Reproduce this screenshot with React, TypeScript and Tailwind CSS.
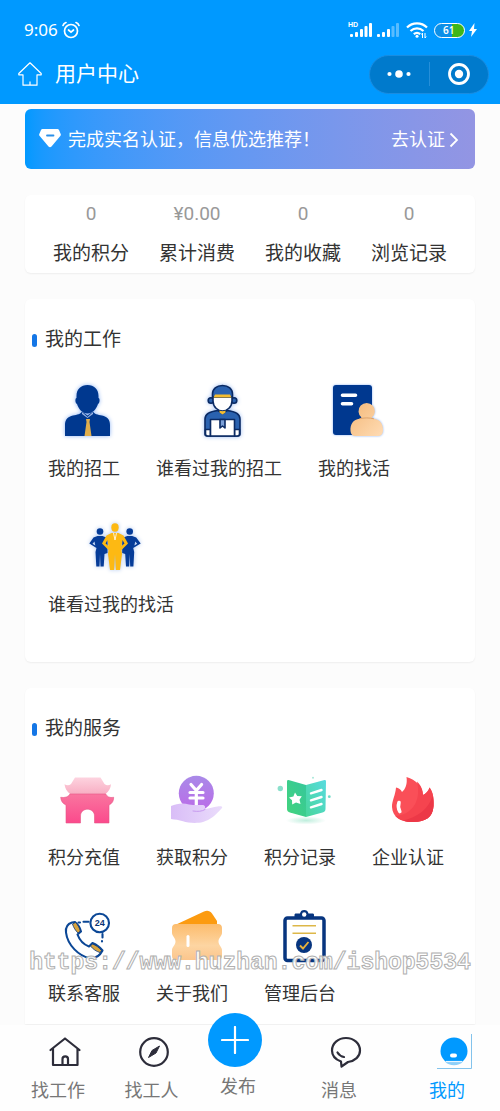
import type { ReactNode } from "react";

interface MenuItem {
  label: string;
  icon: ReactNode;
}

const PersonIcon = () => (
  <svg viewBox="0 0 60 60" className="size-15 drop-shadow-[0_0_2px_#8db4f5]">
    <path
      d="M29.5 5C36 5 40.500 9 40.500 16v2c1.500 0 1.500 5-.5 6-1.500 5-5.500 9.500-10.500 9.500S20.500 29 19 24c-2-1-2-6-.5-6v-2C18.500 9 23 5 29.500 5Z"
      fill="#00388f"
    />
    <path
      d="M7 56V45c0-6 3-8 8-9.500 4-.8 8-1.500 9-4l5.500 4 5.500-4c1 2.500 5 3.200 9 4 5 1.500 8 3.500 8 9.500v11Z"
      fill="#00388f"
    />
    <path d="m24 32 5.500 5 5.500-5v2l-5.500 4-5.500-4Z" fill="#9db8e6" />
    <path d="M28 39h4l-.5 3 2 14h-7l2-14Z" fill="#e0ae4c" />
  </svg>
);

const WorkerIcon = () => (
  <svg viewBox="0 0 60 60" className="size-15 drop-shadow-[0_0_2px_#9dbcf2]">
    <g stroke="#0a2a63" strokeWidth="1.6" strokeLinejoin="round">
      <circle cx="18" cy="20.500" r="2.800" fill="#2a62b0" />
      <circle cx="41" cy="20.500" r="2.800" fill="#2a62b0" />
      <path d="M20 17h19v4c0 6-5 10-9.500 10S20 27 20 21Z" fill="#fff" />
      <path d="M19.500 17v-3c0-5 4-8.500 10-8.500s10 3.500 10 8.500v3Z" fill="#2a62b0" />
      <path d="M12 54V39c0-5 4-7.500 13-8.500l4.500 3 4.500-3c9 1 13 3.500 13 8.500v15c0 2-1 2-2 2H14c-1 0-2 0-2-2Z" fill="#2a62b0" />
      <path d="M12.500 49.500h5V56H15c-2 0-2.500-1-2.500-2ZM41.500 49.500h5V54c0 1-.5 2-2.500 2h-2.500Z" fill="#fff" />
      <path d="M17.500 39.500h24V56h-24Z" fill="#fff" />
      <path d="M27 39.500h5V48l-2.500-2-2.500 2Z" fill="#7ba0d8" />
    </g>
    <path d="M22 14.500h15l1.500 3h-18Z" fill="#f5bd30" />
    <path d="M26.500 30.500c2 1 4 1 6 0v2l-3 2-3-2Z" fill="#f5bd30" />
  </svg>
);

const ResumeIcon = () => (
  <svg viewBox="0 0 60 60" className="size-15 drop-shadow-[0_0_1px_#8db4f5]">
    <defs>
      <linearGradient id="resumeBody" x1="0" y1="0" x2="1" y2="1">
        <stop offset="0" stopColor="#f3b878" />
        <stop offset="1" stopColor="#ffdcb5" />
      </linearGradient>
    </defs>
    <rect x="5" y="5" width="39" height="50" rx="3" fill="#00388f" />
    <path d="M14.500 15.300h13M14.500 23.800h9" stroke="#fff" strokeWidth="3.600" strokeLinecap="round" />
    <path
      d="M22.500 51c-.5-7 3-11.500 9-12.200l2-1.300a8.200 8.200 0 1 1 10.400 0l2 1.300c6 .7 9.600 5.200 9.100 12.200-.3 3.500-2 5-5 5H27.500c-3 0-4.700-1.500-5-5Z"
      fill="url(#resumeBody)"
    />
    <path d="M31.500 38.800c4.500-1.200 10-1.200 14.400 0" stroke="#dca36c" fill="none" />
  </svg>
);

const TeamIcon = () => (
  <svg viewBox="0 0 60 60" className="size-15 drop-shadow-[0_0_2px_#a9c3ee]">
    <g fill="#063c98">
      <circle cx="15" cy="15.500" r="3.300" />
      <path d="M12.500 20h5l5 2v15l-3 1-.8 12.500h-3.200L15 38l-.5 12.500h-3.200L10.500 36l1-4-7.200-4.500L8.500 21.500Zm-3 5.500-2 2.200 2.800 1.800Z" />
      <circle cx="44.700" cy="15.500" r="3.300" />
      <path d="M47.200 20h-5l-5 2v15l3 1 .8 12.500h3.200l.5-12.500.5 12.500h3.200L49.200 36l-1-4 7.500-4.500-4.500-6Zm3 5.500 2 2.200-2.800 1.800Z" />
    </g>
    <g fill="#fdb913">
      <ellipse cx="30" cy="11.500" rx="3.700" ry="4.200" />
      <path d="M26.500 17h7l5 2.500 4.500 8-6.500 6.500.5 4-2 16h-4.200L30 38l-.8 16H25l-2-16 .5-4-6.500-6.500 4.500-8ZM22.500 24l-2 3.500 3 2.500Zm15 0-1 6 3-2.500Z" fillRule="evenodd" />
    </g>
    <path d="m28.500 17 1.500 7 1.500-7" fill="none" stroke="#fff" strokeWidth=".8" />
  </svg>
);

const GateIcon = () => (
  <svg viewBox="0 0 60 60" className="size-15">
    <defs>
      <linearGradient id="gateBase" x1="0" y1="0" x2="0" y2="1">
        <stop offset="0" stopColor="#f9759f" />
        <stop offset="1" stopColor="#fb4a8c" />
      </linearGradient>
      <linearGradient id="gateRoof" x1="0" y1="0" x2="0" y2="1">
        <stop offset="0" stopColor="#fdd3df" />
        <stop offset="1" stopColor="#f8aec3" />
      </linearGradient>
    </defs>
    <path d="M17 8.500h25.500l4 6.500c2 1.500 4 1.500 6.500.3-.3 4-2 6.700-5.300 9.700H12c-3.500-3-5-5.700-5.500-9.700 2.500 1.200 4.500 1.200 6.500-.3Z" fill="url(#gateRoof)" />
    <path
      d="M12 25h35.700c1.500 3 4 4 8 3.300 0 3.700-1.500 6.200-4.700 7.700v18H36.500v-7c0-9-14-9-14 0v7H8V36c-3.500-1.500-5-4-5.300-7.700 4 .7 7.800-.3 9.300-3.300Z"
      fill="url(#gateBase)"
      stroke="#e65587"
      strokeWidth=".6"
    />
  </svg>
);

const YuanHandIcon = () => (
  <svg viewBox="0 0 60 60" className="size-15">
    <defs>
      <linearGradient id="coin" x1="0" y1="0" x2="0" y2="1">
        <stop offset="0" stopColor="#a98ae8" />
        <stop offset="1" stopColor="#bb6be8" />
      </linearGradient>
      <linearGradient id="palm" x1="0" y1="0" x2="1" y2="0">
        <stop offset="0" stopColor="#d9bdf7" />
        <stop offset="1" stopColor="#eadcfb" />
      </linearGradient>
    </defs>
    <circle cx="30.300" cy="24.300" r="17.500" fill="url(#coin)" />
    <path d="m25 15.500 5.300 6 5.300-6M24 23.500h13M24 29h13M30.300 21.500V37" fill="none" stroke="#fff" strokeWidth="3.200" strokeLinecap="round" strokeLinejoin="round" />
    <path
      d="M5 37c6-2.500 12-3.500 18-1.500l4 .5h9c3 0 4 2 2.500 4 5-.3 9-2 13-2.500 3.500-.5 5.500 0 4.500 1.500-6 7-12 12-19 14-6 1.500-15 1-20-.8C13 51 9 50.500 5 50Z"
      fill="url(#palm)"
    />
    <path d="M27 42c5 .8 9 .5 12-1.500" stroke="#c79aef" fill="none" strokeLinecap="round" />
  </svg>
);

const RecordBookIcon = () => (
  <svg viewBox="0 0 60 60" className="size-15">
    <defs>
      <linearGradient id="pageLeft" x1="1" y1="0" x2="0" y2="1">
        <stop offset="0" stopColor="#35c79c" />
        <stop offset="1" stopColor="#43d47c" />
      </linearGradient>
      <linearGradient id="pageRight" x1="1" y1="0" x2="0" y2="1">
        <stop offset="0" stopColor="#58dbe0" />
        <stop offset="1" stopColor="#48d69a" />
      </linearGradient>
      <radialGradient id="bookShade">
        <stop offset="0" stopColor="#bfeedd" />
        <stop offset="1" stopColor="#ffffff" />
      </radialGradient>
    </defs>
    <ellipse cx="32" cy="51.500" rx="20" ry="4" fill="url(#bookShade)" />
    <path d="M14.500 11 32 16v32l-16-4.500c-2-.6-3-1.500-3-3.500V12.500c0-1 .5-1.700 1.500-1.500Z" fill="url(#pageLeft)" />
    <path d="M50.500 11 32 16v32l16.500-4.500c2-.6 3-1.500 3-3.500l.5-27.500c0-1-.5-1.700-1.500-1.500Z" fill="url(#pageRight)" />
    <path d="m21 23.500 2.300 3.500 4.500.2-2.300 3.600 1 4.200-4.500-1.500-3.800 2-.2-4.300L15 28.500l4.400-1Z" fill="#fff" />
    <path d="m37 24.300 10.500-3.300M37 31.300 47.500 28M37 38.300 47.500 35" stroke="#fff" strokeWidth="2.400" strokeLinecap="round" />
    <circle cx="6.300" cy="19.500" r="2.700" fill="#8be0cc" />
    <circle cx="55.300" cy="27.700" r="1.400" fill="#6fdcc8" />
    <circle cx="39" cy="8.700" r="1" fill="#a8e8d8" />
  </svg>
);

const FlameIcon = () => (
  <svg viewBox="0 0 60 60" className="size-15">
    <path
      d="M24.500 8C34 11 40.500 17 41 26c3-1.500 5.500-4 6.500-7.500C51 23 52 29 51.500 37c-.5 11-8 16-20.500 16S10.500 48 10 38c-.2-6 3.500-12 4-19.500 2.500.5 5 2 6 4.500 3.500-3 5.500-8 4.500-15Z"
      fill="#fa4f58"
    />
    <path d="M35 12.500c4 4 5.800 8 6 13.500 3-1.500 5.500-4 6.500-7.500C51 23 52 29 51.500 37c-.5 11-8 16-20.500 16-8 0-14-2-17.500-6C28 46 40 34 35 12.500Z" fill="#f5444f" />
    <path d="M50.500 27C47 39 36 48.500 21 51.500c3 1 6 1.500 10 1.500 12.500 0 20-5 20.500-16 .2-4-.2-7-1-10Z" fill="#ec3847" />
    <path d="M17 33.500c-1 3-.8 6 .8 9" stroke="#fff" strokeWidth="3.600" strokeLinecap="round" fill="none" />
  </svg>
);

const HotlineIcon = () => (
  <svg viewBox="0 0 60 60" className="size-15">
    <g fill="none" stroke="#0b4796" strokeWidth="2.100" strokeLinejoin="round" strokeLinecap="round">
      <path d="M14 17.500c-5 1.500-6.500 5.500-6 10C9.500 40 21 51.500 32 53c6 .5 10-2.500 12.500-7.500-3-4-6.500-6-10-7.500L31 41.500C25.500 39.500 21.500 35 19.500 29.500l3.500-3c-1-4-3-7-6-9.500Z" fill="#fff" />
      <path d="M20.500 17.500h1.500M25.500 16.800h5M44.500 29v3.500M44 36v.5" />
      <circle cx="41.700" cy="18" r="9.300" fill="#fff" />
    </g>
    <path d="m14.500 19 3-1.500c2.500 2.500 4 5.500 4.800 8.500l-2.300 2c-2.500-2.500-4.500-5.500-5.500-9ZM34.500 39c3.500 1.300 6.500 3.500 9 6.500l-1.500 2c-3.500-1-7-3.200-9.500-6.500Z" fill="#d9a43c" stroke="#0b3576" strokeWidth=".8" />
    <text x="41.700" y="21" textAnchor="middle" fontSize="9" fontWeight="700" fontFamily="Liberation Sans, sans-serif" fill="#0b3576">
      24
    </text>
  </svg>
);

const WalletIcon = () => (
  <svg viewBox="0 0 60 60" className="size-15">
    <defs>
      <linearGradient id="walletFront" x1="0" y1="0" x2="0" y2="1">
        <stop offset="0" stopColor="#fcbc6c" />
        <stop offset=".6" stopColor="#fdd5a2" />
        <stop offset="1" stopColor="#fbc58c" />
      </linearGradient>
    </defs>
    <path d="M8 20.500 38 6.500c3-1.300 6-.8 8 2l5 7.500v5Z" fill="#fc9b10" />
    <path d="M10 19h42c2.500 0 4 1.500 4 4v5c0 3-3.500 5-3.500 8.500S56 42 56 45v6c0 2.500-1.500 4-4 4H10c-2.500 0-4-1.500-4-4v-6c0-3 3.500-5 3.500-8.500S6 31 6 28v-5c0-2.500 1.500-4 4-4Z" fill="url(#walletFront)" />
    <path d="M22 31.500v9" stroke="#fff" strokeWidth="3" strokeLinecap="round" />
  </svg>
);

const ClipboardIcon = () => (
  <svg viewBox="0 0 60 60" className="size-15">
    <rect x="11" y="13" width="39" height="42.500" rx="2.500" fill="#fff" stroke="#07357f" strokeWidth="3.500" />
    <path d="M20.500 13.500V10c0-1 .5-1.500 1.500-1.500h4C26.500 6 28 5 30.200 5s3.800 1 4.300 3.500h4c1 0 1.500.5 1.500 1.500v3.500Z" fill="#07357f" />
    <circle cx="30.200" cy="9.500" r="2.200" fill="#fff" />
    <path d="M18.500 20.700H42M18.500 28.300H42" stroke="#ddb748" strokeWidth="1.500" />
    <circle cx="30" cy="40" r="8" fill="#07357f" />
    <path d="m26 40.500 3 3 5.500-6.500" stroke="#e8b33c" strokeWidth="1.900" fill="none" />
  </svg>
);

const stats = [
  { label: "我的积分", value: "0" },
  { label: "累计消费", value: "¥0.00" },
  { label: "我的收藏", value: "0" },
  { label: "浏览记录", value: "0" },
];

const workItems: MenuItem[] = [
  { label: "我的招工", icon: <PersonIcon /> },
  { label: "谁看过我的招工", icon: <WorkerIcon /> },
  { label: "我的找活", icon: <ResumeIcon /> },
  { label: "谁看过我的找活", icon: <TeamIcon /> },
];

const serviceItems: MenuItem[] = [
  { label: "积分充值", icon: <GateIcon /> },
  { label: "获取积分", icon: <YuanHandIcon /> },
  { label: "积分记录", icon: <RecordBookIcon /> },
  { label: "企业认证", icon: <FlameIcon /> },
  { label: "联系客服", icon: <HotlineIcon /> },
  { label: "关于我们", icon: <WalletIcon /> },
  { label: "管理后台", icon: <ClipboardIcon /> },
];

const StatusBar = () => (
  <div className="flex h-10 items-center justify-between pl-6 pr-[23px]">
    <div className="flex items-center gap-1">
      <span className="font-['Noto_Sans',sans-serif] text-[17px] leading-5">9:06</span>
      <svg viewBox="0 0 18 18" className="size-[18px]" fill="none" stroke="currentColor" strokeWidth="1.700" strokeLinecap="round">
        <circle cx="9" cy="10" r="6.500" />
        <path d="m6.500 9 2.500 2.200L11.500 9M1 4.500C1.500 3 2.500 2 4 1.500M17 4.500C16.500 3 15.500 2 14 1.500" />
      </svg>
    </div>
    <div className="flex items-center">
      {/* Señal, wifi y batería */}
      <svg viewBox="0 0 52 18" className="h-[18px] w-[52px]" fill="currentColor">
        <text x="0" y="6" fontSize="7" fontWeight="700" fontFamily="Liberation Sans, sans-serif">HD</text>
        <rect x="2" y="13" width="3" height="3" rx="1" />
        <rect x="7" y="11" width="3" height="5" rx="1" />
        <rect x="12" y="8" width="3" height="8" rx="1" />
        <rect x="16.500" y="5" width="3" height="11" rx="1" />
        <rect x="21" y="2" width="3" height="14" rx="1" />
        <rect x="29" y="13" width="3" height="3" rx="1" />
        <rect x="34" y="11" width="3" height="5" rx="1" />
        <rect x="39" y="8" width="3" height="8" rx="1" />
        <rect x="43.500" y="5" width="3" height="11" rx="1" opacity=".35" />
        <rect x="48" y="2" width="3" height="14" rx="1" opacity=".35" />
      </svg>
      <svg viewBox="0 0 22 18" className="ml-1.5 h-[18px] w-[22px]" fill="none" stroke="currentColor" strokeWidth="2.200">
        <path d="M1 6.500c5.500-5.500 14.500-5.500 20 0M4.500 10c3.800-3.500 9.200-3.500 13 0M7.800 13.200c2-1.700 4.400-1.700 6.400 0" />
        <circle cx="11" cy="15.300" r="1.500" fill="currentColor" stroke="none" />
        <path d="M16.500 12v5M19 12v5m-3.500-3.500 1-1.500m2.500 5 1.200-1.500" strokeWidth="1" />
      </svg>
      <span className="ml-1.5 flex h-[15px] w-[31px] items-center rounded-full border border-white bg-[linear-gradient(90deg,#0b8fe8_60%,#3fb618_60%)] pl-2 font-['Noto_Sans',sans-serif] text-[10px] leading-3 font-semibold">
        61
      </span>
      <svg viewBox="0 0 8 14" className="ml-1 h-3.5 w-2" fill="currentColor">
        <path d="M5.500 0 0 8h3L2 14l6-8H5Z" />
      </svg>
    </div>
  </div>
);

const Header = () => (
  <header className="bg-[#0099ff] pt-2.5 pb-1.5 text-white">
    <StatusBar />
    <div className="flex h-12 items-center justify-between pr-[11px] pl-[18px]">
      <div className="flex items-center gap-[13px]">
        <a href="#home" aria-label="首页">
          <svg viewBox="0 0 24 24" className="size-6" fill="none" stroke="currentColor" strokeWidth="1.200" strokeLinejoin="round">
            <path d="M12 .8.800 11.500v1.300H5v10.400h14V12.800h4.200v-1.300ZM12 23v-3.500" />
          </svg>
        </a>
        <h1 className="text-[21px] leading-7">用户中心</h1>
      </div>
      <div className="flex h-[39px] w-30 items-center rounded-full border border-[#1a8ce0] bg-[#007acc]">
        <button type="button" aria-label="更多" className="flex flex-1 justify-center">
          <svg viewBox="0 0 24 8" className="h-2 w-6" fill="currentColor">
            <circle cx="2.500" cy="4" r="2.100" />
            <circle cx="12" cy="4" r="3.800" />
            <circle cx="21.500" cy="4" r="2.100" />
          </svg>
        </button>
        <span className="h-6 w-px bg-[#268fd9]" />
        <button type="button" aria-label="关闭" className="flex flex-1 justify-center">
          <svg viewBox="0 0 24 24" className="size-6">
            <circle cx="12" cy="12" r="9.500" fill="none" stroke="currentColor" strokeWidth="2.800" />
            <circle cx="12" cy="12" r="4.200" fill="currentColor" />
          </svg>
        </button>
      </div>
    </div>
  </header>
);

const MenuCard = ({ title, items, className, children }: { title: string; items: MenuItem[]; className: string; children?: ReactNode }) => (
  <section className={`relative bg-white pt-[27px] shadow-[0_1px_2px_rgba(0,0,0,0.06)] ${className}`}>
    <h2 className="flex items-center gap-2 pl-[7px] text-[19px] leading-7">
      <span className="h-[13px] w-[5px] rounded-full bg-[#1476e6]" />
      {title}
    </h2>
    <ul className="mt-[26px] flex flex-wrap gap-x-9 gap-y-[33px] pl-[23px]">
      {items.map((item) => (
        <li key={item.label}>
          <a href="#menu" className="flex flex-col items-center gap-[15px]">
            <span className="pl-2">{item.icon}</span>
            <span className="text-[18px] leading-7">{item.label}</span>
          </a>
        </li>
      ))}
    </ul>
    {children}
  </section>
);

const TabBar = () => (
  <nav className="relative mt-auto grid grid-cols-[92fr_95fr_78fr_124fr_92fr] bg-[#fefefe] pt-[9px] pr-[7px] pb-1.5 pl-3 text-[18px] leading-7 text-[#777]">
    <a href="#jobs" className="flex flex-col items-center gap-[7px]">
      <svg viewBox="0 0 36 36" className="ml-3.5 size-9" fill="none" stroke="#2d2d3a" strokeWidth="2.200" strokeLinejoin="round" strokeLinecap="round">
        <path d="M3.500 16 18 4.500 32.500 16M6 14.500V31h24.500V14.500M15.500 31v-6c0-3.500 5.500-3.500 5.500 0v6" />
      </svg>
      找工作
    </a>
    <a href="#workers" className="flex flex-col items-center gap-[7px]">
      <svg viewBox="0 0 36 36" className="ml-1 size-9" fill="none" stroke="#2d2d3a" strokeWidth="2.200">
        <circle cx="18" cy="18" r="13.800" />
        <path d="m12.500 23.500 3.500-7 7.500-4.500-3.500 7Z" fill="#2d2d3a" strokeWidth="1" />
      </svg>
      找工人
    </a>
    <button type="button" className="-mt-[21px] flex flex-col items-center gap-1.5">
      <span className="mr-1.5 flex size-[54px] items-center justify-center rounded-full bg-[#0099ff]">
        <svg viewBox="0 0 28 28" className="size-7" stroke="#fff" strokeWidth="2.200" strokeLinecap="round">
          <path d="M14 1v26M1 14h26" />
        </svg>
      </span>
      发布
    </button>
    <a href="#messages" className="flex flex-col items-center gap-[7px]">
      <svg viewBox="0 0 36 36" className="ml-3.5 size-9" fill="none" stroke="#2d2d3a" strokeWidth="2.200" strokeLinejoin="round" strokeLinecap="round">
        <path d="M13 27.500C7.500 25.500 4 21.500 4 16.500 4 9.500 10 4 18 4s14 5.500 14 12.500c0 6-5 10.500-12 11.500l-6.500 4.500Z" />
        <path d="M9.500 18.500c1.500 2.500 3.500 4 6.500 4.500" />
      </svg>
      消息
    </a>
    <a href="#me" aria-current="page" className="flex flex-col items-center gap-[7px] text-[#0099ff]">
      <svg viewBox="0 0 36 36" className="ml-3.5 size-9">
        <circle cx="18" cy="17" r="13.500" fill="#0099ff" />
        <rect x="14" y="19.500" width="7" height="4" rx="2" fill="#fff" />
        <path d="M9 27.500h18c-4 5-14 5-18 0Z" fill="#8ccff9" />
        <path d="M10 27.500h16" stroke="#e8f6ff" strokeWidth="1.200" />
        <path d="M35.500 0v34.500H1" fill="none" stroke="#83c3ec" />
      </svg>
      我的
    </a>
  </nav>
);

export default function App() {
  return (
    <div className="flex min-h-screen flex-col bg-[#fcfcfc] font-['Roboto','Noto_Sans_CJK_SC',sans-serif] text-[#333]">
      <Header />
      <main className="px-[25px] pt-[5px]">
        <a
          href="#verify"
          className="flex h-15 items-center rounded-md bg-linear-to-r from-[#0099ff] to-[#9395e3] pt-0.5 pr-4 pl-3.5 text-[18px] leading-7 text-white"
        >
          <svg viewBox="0 0 22 20" className="mr-[7px] mb-1 h-5 w-[22px]">
            <path d="M4 1h14c1 0 1.500.3 2 1l1.700 4c.3.800.2 1.300-.4 2L12.500 18.500c-1 1-2 1-3 0L.700 8c-.6-.7-.7-1.200-.4-2L2 2c.5-.7 1-1 2-1Z" fill="#fff" />
            <path d="M8 7.500h6.500" stroke="#2b8fe8" strokeWidth="1.800" strokeLinecap="round" />
          </svg>
          <span className="flex-1">完成实名认证，信息优选推荐！</span>
          <span>去认证</span>
          <svg viewBox="0 0 10 16" className="ml-1 h-4 w-2.5" fill="none" stroke="currentColor" strokeWidth="1.800">
            <path d="m1.500 1.500 6.500 6.500-6.500 6.500" />
          </svg>
        </a>

        <dl className="mt-[26px] grid grid-cols-4 rounded-md bg-white px-[13px] pt-[5px] pb-[5px] text-center text-[19px] leading-7 shadow-[0_1px_2px_rgba(0,0,0,0.06)]">
          {stats.map((stat) => (
            <div key={stat.label} className="flex flex-col-reverse gap-3">
              <dt>{stat.label}</dt>
              <dd className="text-[#999]">{stat.value}</dd>
            </div>
          ))}
        </dl>

        <MenuCard title="我的工作" items={workItems} className="mt-[26px] rounded-md pb-[43px]" />
        <MenuCard title="我的服务" items={serviceItems} className="mt-[26px] rounded-t-md pb-4">
          <p className="pointer-events-none absolute inset-x-0 bottom-[47px] text-center font-['Liberation_Mono',monospace] text-[23px] leading-7 whitespace-nowrap text-white/90 [-webkit-text-stroke:1px_#b0b0b0] font-bold">
            https://www.huzhan.com/ishop5534
          </p>
        </MenuCard>
      </main>
      <TabBar />
    </div>
  );
}
